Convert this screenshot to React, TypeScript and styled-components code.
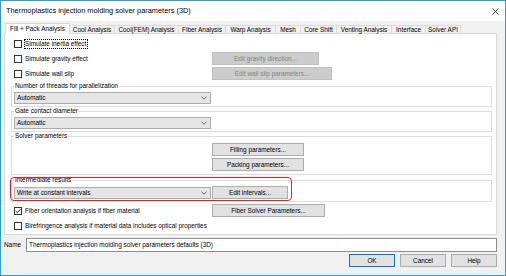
import React from 'react'
import styled, { createGlobalStyle } from 'styled-components'

const FONT = `'Liberation Sans', Arial, sans-serif`
const LEFT_COLUMN = '197px'

const GlobalStyle = createGlobalStyle`
  html, body {
    margin: 0;
    padding: 0;
    background: #ffffff;
  }

  * {
    box-sizing: border-box;
  }
`

const Window = styled.div`
  background: #f0f0f0;
  border: 1px solid #2f9ad8;
  color: #000;
  display: flex;
  flex-direction: column;
  font-family: ${FONT};
  font-size: 6.4px;
  height: 276px;
  line-height: 8px;
  overflow: hidden;
  width: 506px;
`

const TitleBar = styled.div`
  align-items: center;
  background: #fff;
  display: flex;
  font-size: 7.4px;
  height: 20px;
  justify-content: space-between;
  padding: 0 6px 0 5px;
`

const Body = styled.div`
  display: flex;
  flex-direction: column;
  padding: 0 8px 0 3px;
`

const TabStrip = styled.div`
  align-items: flex-end;
  display: flex;
  height: 11px;
  margin-top: 2px;
  padding-left: 1px;
`

const Tab = styled.div<{ $width: number; $active?: boolean }>`
  align-items: center;
  background: ${props => (props.$active ? '#fff' : '#f0f0f0')};
  border: 1px solid #d9d9d9;
  border-bottom: ${props => (props.$active ? 'none' : '1px solid #d9d9d9')};
  display: flex;
  height: ${props => (props.$active ? '11px' : '9px')};
  justify-content: center;
  margin-right: -1px;
  position: relative;
  white-space: nowrap;
  width: ${props => props.$width}px;
  z-index: ${props => (props.$active ? 1 : 0)};
`

const Panel = styled.div`
  background: #fff;
  border: 1px solid #d9d9d9;
  display: flex;
  flex-direction: column;
  margin-top: -1px;
  padding: 2px 0 1px 0;
`

const FieldRow = styled.div<{ $height?: number }>`
  align-items: center;
  column-gap: 1px;
  display: grid;
  grid-template-columns: ${LEFT_COLUMN} auto;
  height: ${props => (props.$height ? `${props.$height}px` : 'auto')};
  justify-items: start;
`

const CheckRow = styled(FieldRow)`
  height: 15px;
  padding-left: 9px;
`

const CheckLabel = styled.label`
  align-items: center;
  display: flex;
  gap: 2px;
  white-space: nowrap;
`

const Box = styled.span`
  align-items: center;
  background: #fff;
  border: 1px solid #333;
  display: flex;
  height: 8px;
  justify-content: center;
  width: 8px;
`

const CheckText = styled.span<{ $focused?: boolean }>`
  border: 1px ${props => (props.$focused ? 'dotted #000' : 'solid transparent')};
  padding-right: 1px;
`

const Group = styled.fieldset<{ $gapTop?: number }>`
  border: 1px solid #dcdcdc;
  margin: ${props => props.$gapTop || 0}px 4px 0 6px;
  min-width: 0;
  padding: 2px 2px 2px 2px;
`

const Legend = styled.legend`
  line-height: 8px;
  padding: 0 1px;
`

const MarkedArea = styled.div`
  margin-top: 1px;
  position: relative;

  ${Group} {
    margin-top: 0;
  }
`

const Highlight = styled.div`
  border: 1px solid #ec1c24;
  border-radius: 4px;
  height: 24px;
  left: 5px;
  pointer-events: none;
  position: absolute;
  top: 1px;
  width: 282px;
`

const ComboBox = styled.div`
  align-items: center;
  background: #e5e5e5;
  border: 1px solid #acacac;
  display: flex;
  height: 12px;
  justify-content: space-between;
  padding: 0 3px 0 2px;
  width: 100%;
`

const Button = styled.div<{ $width: number; $disabled?: boolean; $default?: boolean }>`
  align-items: center;
  background: ${props => (props.$disabled ? '#cccccc' : '#e1e1e1')};
  border: 1px solid
    ${props => (props.$default ? '#0078d7' : props.$disabled ? '#bfbfbf' : '#adadad')};
  color: ${props => (props.$disabled ? '#838383' : '#000')};
  display: flex;
  height: 13px;
  justify-content: center;
  white-space: nowrap;
  width: ${props => props.$width}px;
`

const ButtonStack = styled.div`
  display: flex;
  flex-direction: column;
  gap: 2px;
  padding: 1px 0;
`

const NameRow = styled.div`
  align-items: center;
  display: grid;
  grid-template-columns: 22px 1fr;
  margin-top: 3px;
`

const NameInput = styled.div`
  align-items: center;
  background: #fff;
  border: 1px solid #8e8e8e;
  display: flex;
  height: 14px;
  padding-left: 2px;
  white-space: nowrap;
`

const DialogButtons = styled.div`
  display: flex;
  gap: 5px;
  justify-content: flex-end;
  margin-top: 2px;
`

const tabs: [string, number][] = [
  ['Fill + Pack Analysis', 65],
  ['Cool Analysis', 46],
  ['Cool(FEM) Analysis', 65],
  ['Fiber Analysis', 48],
  ['Warp Analysis', 51],
  ['Mesh', 26],
  ['Core Shift', 37],
  ['Venting Analysis', 56],
  ['Interface', 35],
  ['Solver API', 36],
]

const CloseIcon = () => (
  <svg width="7" height="7" viewBox="0 0 7 7">
    <path d="M0.5 0.5 L6.5 6.5 M6.5 0.5 L0.5 6.5" stroke="#222" strokeWidth="0.9" fill="none" />
  </svg>
)

const Chevron = () => (
  <svg width="6" height="4" viewBox="0 0 6 4">
    <path d="M0.5 0.8 L3 3.2 L5.5 0.8" stroke="#555" strokeWidth="0.9" fill="none" />
  </svg>
)

interface CheckProps {
  checked?: boolean
  focused?: boolean
  label: string
}

const Check = ({ checked, focused, label }: CheckProps) => (
  <CheckLabel>
    <Box>
      {checked && (
        <svg width="6" height="6" viewBox="0 0 6 6">
          <path d="M0.6 3 L2.3 4.7 L5.4 1.2" stroke="#222" strokeWidth="1" fill="none" />
        </svg>
      )}
    </Box>
    <CheckText $focused={focused}>{label}</CheckText>
  </CheckLabel>
)

const Combo = ({ value }: { value: string }) => (
  <ComboBox>
    <span>{value}</span>
    <Chevron />
  </ComboBox>
)

const App = () => {
  return (
    <>
      <GlobalStyle />
      <Window>
        <TitleBar>
          <span>Thermoplastics injection molding solver parameters (3D)</span>
          <CloseIcon />
        </TitleBar>
        <Body>
          <TabStrip>
            {tabs.map(([name, width], index) => (
              <Tab $active={index === 0} $width={width} key={name}>
                {name}
              </Tab>
            ))}
          </TabStrip>
          <Panel>
            <CheckRow>
              <Check focused label="Simulate inertia effect" />
            </CheckRow>
            <CheckRow>
              <Check label="Simulate gravity effect" />
              <Button $disabled $width={107}>
                Edit gravity direction...
              </Button>
            </CheckRow>
            <CheckRow>
              <Check label="Simulate wall slip" />
              <Button $disabled $width={120}>
                Edit wall slip parameters...
              </Button>
            </CheckRow>

            <Group $gapTop={1}>
              <Legend>Number of threads for parallelization</Legend>
              <FieldRow>
                <Combo value="Automatic" />
              </FieldRow>
            </Group>

            <Group>
              <Legend>Gate contact diameter</Legend>
              <FieldRow>
                <Combo value="Automatic" />
              </FieldRow>
            </Group>

            <Group>
              <Legend>Solver parameters</Legend>
              <FieldRow>
                <div />
                <ButtonStack>
                  <Button $width={92}>Filling parameters...</Button>
                  <Button $width={92}>Packing parameters...</Button>
                </ButtonStack>
              </FieldRow>
            </Group>

            <MarkedArea>
              <Group>
                <Legend>Intermediate results</Legend>
                <FieldRow $height={13}>
                  <Combo value="Write at constant intervals" />
                  <Button $width={76}>Edit intervals...</Button>
                </FieldRow>
              </Group>
              <Highlight />
            </MarkedArea>

            <CheckRow style={{ marginTop: 1 }}>
              <Check checked label="Fiber orientation analysis if fiber material" />
              <Button $width={113}>Fiber Solver Parameters...</Button>
            </CheckRow>
            <CheckRow>
              <Check label="Birefringence analysis if material data includes optical properties" />
            </CheckRow>
          </Panel>

          <NameRow>
            <span>Name</span>
            <NameInput>Thermoplastics injection molding solver parameters defaults (3D)</NameInput>
          </NameRow>

          <DialogButtons>
            <Button $default $width={46}>
              OK
            </Button>
            <Button $width={46}>Cancel</Button>
            <Button $width={46}>Help</Button>
          </DialogButtons>
        </Body>
      </Window>
    </>
  )
}

export default App
